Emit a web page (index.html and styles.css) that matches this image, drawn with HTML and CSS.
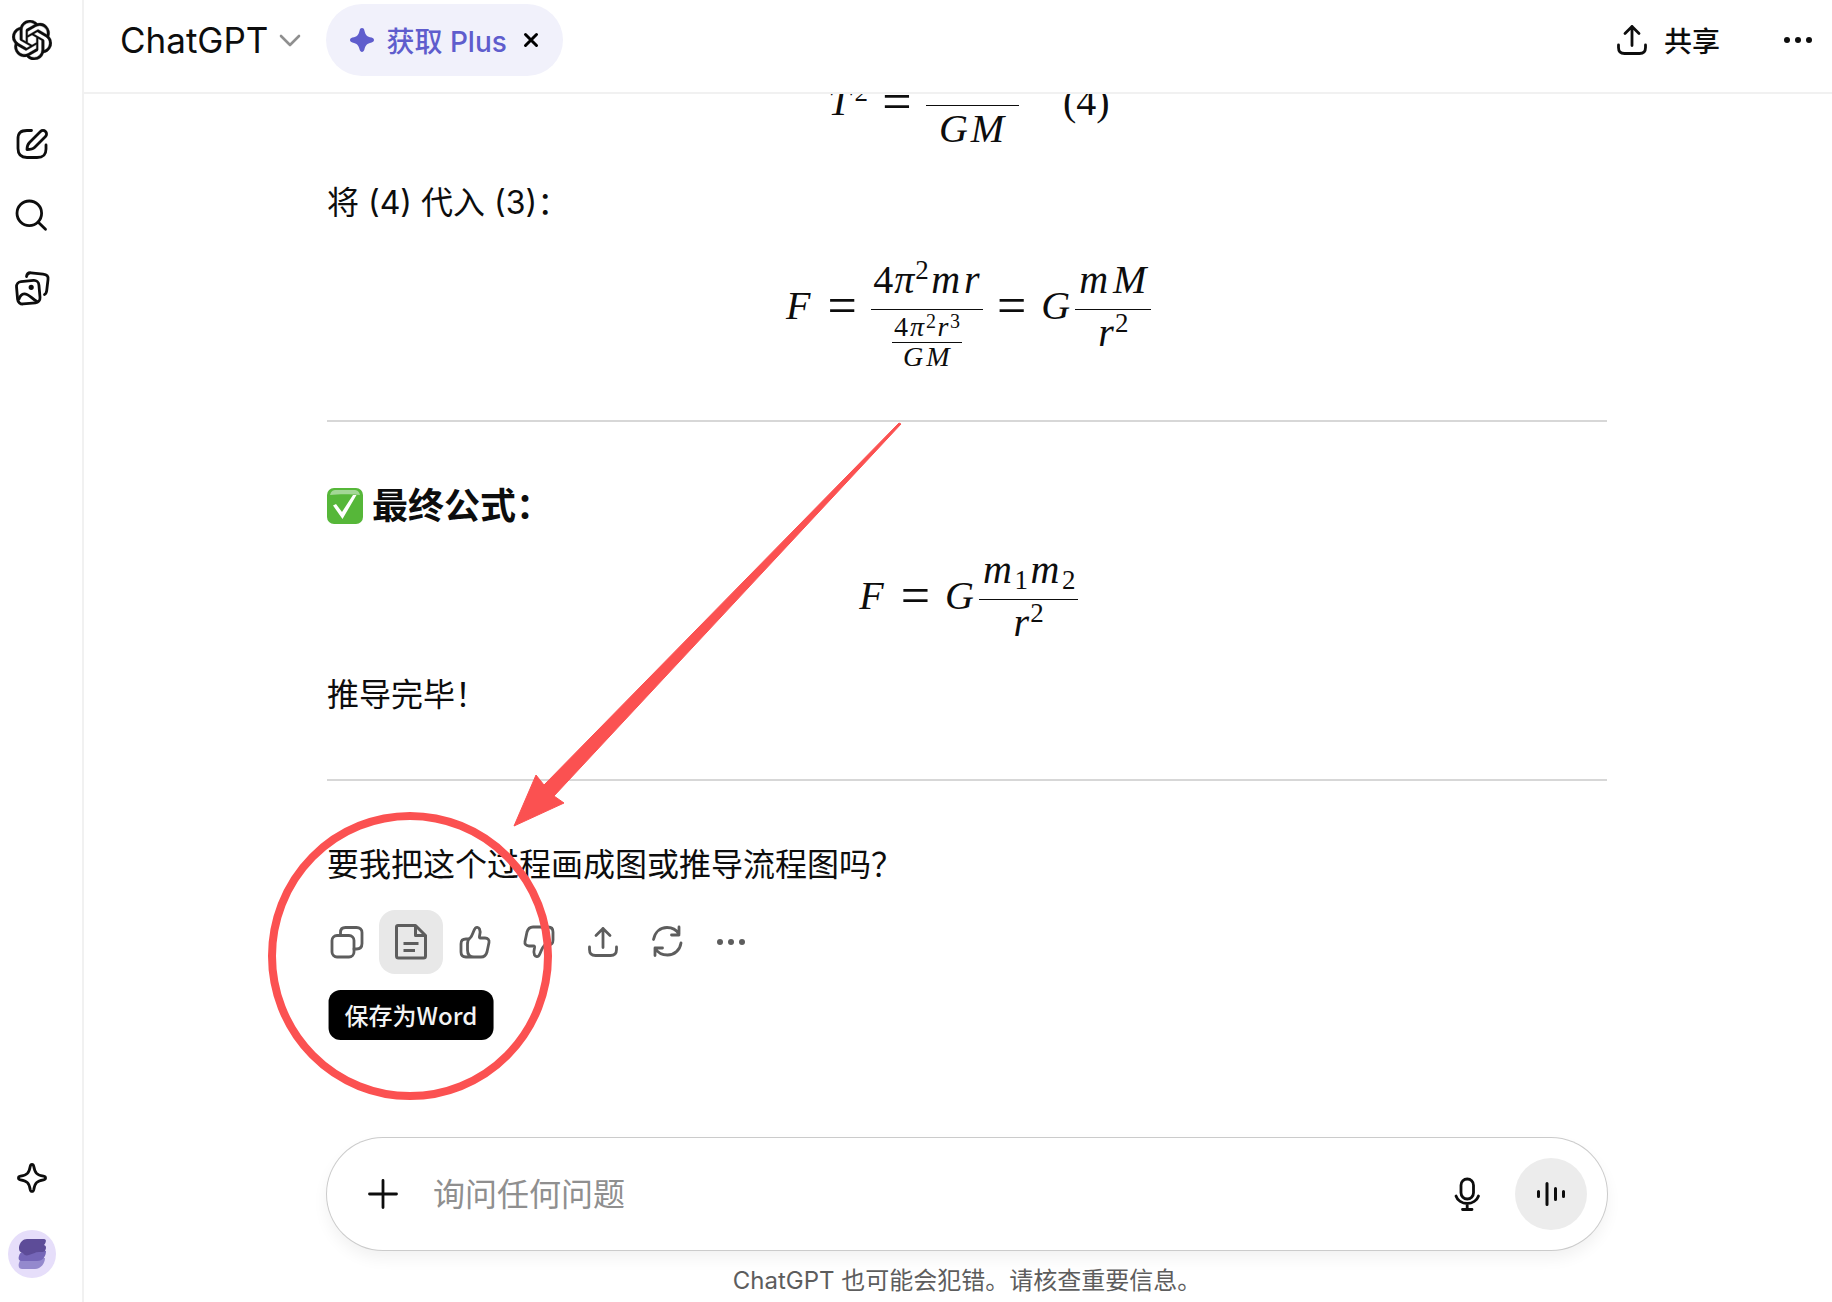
FILE: index.html
```html
<!DOCTYPE html>
<html lang="zh-CN">
<head>
<meta charset="utf-8">
<meta name="viewport" content="width=device-width, initial-scale=1">
<title>ChatGPT</title>
<link rel="stylesheet" href="styles.css">
</head>
<body>
<div class="app">
  <nav class="sidebar" aria-label="侧边栏">
    <a class="side-logo" href="#" aria-label="主页">
      <svg class="logo" width="40" height="40" viewBox="0 0 24 24" fill="currentColor"><path d="M22.2819 9.8211a5.9847 5.9847 0 0 0-.5157-4.9108 6.0462 6.0462 0 0 0-6.5098-2.9A6.0651 6.0651 0 0 0 4.9807 4.1818a5.9847 5.9847 0 0 0-3.9977 2.9 6.0462 6.0462 0 0 0 .7427 7.0966 5.98 5.98 0 0 0 .511 4.9107 6.051 6.051 0 0 0 6.5146 2.9001A5.9847 5.9847 0 0 0 13.2599 24a6.0557 6.0557 0 0 0 5.7718-4.2058 5.9894 5.9894 0 0 0 3.9977-2.9001 6.0557 6.0557 0 0 0-.7475-7.0729zm-9.022 12.6081a4.4755 4.4755 0 0 1-2.8764-1.0408l.1419-.0804 4.7783-2.7582a.7948.7948 0 0 0 .3927-.6813v-6.7369l2.02 1.1686a.071.071 0 0 1 .038.052v5.5826a4.504 4.504 0 0 1-4.4945 4.4944zm-9.6607-4.1254a4.4708 4.4708 0 0 1-.5346-3.0137l.142.0852 4.783 2.7582a.7712.7712 0 0 0 .7806 0l5.8428-3.3685v2.3324a.0804.0804 0 0 1-.0332.0615L9.74 19.9502a4.4992 4.4992 0 0 1-6.1408-1.6464zM2.3408 7.8956a4.485 4.485 0 0 1 2.3655-1.9728V11.6a.7664.7664 0 0 0 .3879.6765l5.8144 3.3543-2.0201 1.1685a.0757.0757 0 0 1-.071 0l-4.8303-2.7865A4.504 4.504 0 0 1 2.3408 7.872zm16.5963 3.8558L13.1038 8.364 15.1192 7.2a.0757.0757 0 0 1 .071 0l4.8303 2.7913a4.4944 4.4944 0 0 1-.6765 8.1042v-5.6772a.79.79 0 0 0-.407-.667zm2.0107-3.0231l-.142-.0852-4.7735-2.7818a.7759.7759 0 0 0-.7854 0L9.409 9.2297V6.8974a.0662.0662 0 0 1 .0284-.0615l4.8303-2.7866a4.4992 4.4992 0 0 1 6.6802 4.66zM8.3065 12.863l-2.02-1.1638a.0804.0804 0 0 1-.038-.0567V6.0742a4.4992 4.4992 0 0 1 7.3757-3.4537l-.142.0805L8.704 5.459a.7948.7948 0 0 0-.3927.6813zm1.0976-2.3654l2.602-1.4998 2.6069 1.4998v2.9994l-2.5974 1.4997-2.6067-1.4997Z"/></svg>
    </a>
    <button class="side-btn" aria-label="新聊天">
      <svg class="icon" viewBox="0 0 40 40"><path d="M19.5 6.5H15C8.500 6.500 6 9 6 15v9.500C6 31 9 33.500 15 33.500h10c6.500 0 9-2.500 9-8.500v-4"/><path d="M15 25.500c0-3.500 1-5.500 2.500-7l11-11a3.500 3.500 0 0 1 5 5l-11 11c-1.500 1.500-4 2-7.500 2Z"/></svg>
    </button>
    <button class="side-btn" aria-label="搜索">
      <svg class="icon" viewBox="0 0 40 40"><circle cx="17.300" cy="17.300" r="12.300"/><path d="M26.300 26.300l7.200 7"/></svg>
    </button>
    <button class="side-btn" aria-label="库">
      <svg class="icon" viewBox="0 0 40 40"><rect x="5" y="13" width="22.500" height="22.500" rx="5" transform="rotate(-5 16 24)"/><path d="M14.500 8.500c.5-3 2-4 4.500-3.700l12 1.300c4 .5 5.500 2 5 5.500l-1.300 11c-.3 2.200-.9 3.400-2.200 3.900M7 31c1-3 2.800-5 5.200-5.200C16.500 25.500 19 30 25 33.500"/><circle cx="19.200" cy="19.300" r="1.200" fill="currentColor"/></svg>
    </button>
    <button class="side-btn side-bottom" aria-label="升级套餐">
      <svg class="icon" viewBox="0 0 40 40"><path d="M20 6.500c1 0 1.500.7 1.800 2 1.100 6.500 3 8.600 9.700 9.700 2.700.5 2.700 3.100 0 3.600-6.700 1.100-8.600 3.200-9.700 9.700-.5 2.600-3.100 2.600-3.600 0-1.100-6.500-3-8.600-9.700-9.700-2.700-.5-2.700-3.100 0-3.600 6.700-1.100 8.600-3.200 9.700-9.700.3-1.300.8-2 1.800-2Z"/></svg>
    </button>
    <button class="avatar" aria-label="个人资料">
      <svg width="48" height="48" viewBox="0 0 48 48"><path fill="#9489cd" d="M11 33c1-4 4-5 8-5h18c0 5-4 11-10 11H14c-3 0-4-3-3-6Z"/><path fill="#7566b8" d="M11 26c1-4 4-5 8-5h19c0 5-3 10-9 10H14c-3 0-4-2-3-5Z"/><path fill="#5d4c98" d="M11 17c1-5 4-8 8-8h17c3 0 2 4 0 6 3 1 2 4 1 6-1 1-3 1-6 1-4 0-6 2-10 3-3 1-5 0-6-2-4-1-4-3-4-6Z"/></svg>
    </button>
  </nav>

  <div class="main">
    <header class="topbar">
      <button class="model">ChatGPT
        <svg width="24" height="24" viewBox="0 0 24 24" fill="none" stroke="#8f8f8f" stroke-width="2.600" stroke-linecap="round" stroke-linejoin="round"><path d="M3 8l9 9 9-9"/></svg>
      </button>
      <div class="plus-pill">
        <button class="plus-link">
          <svg width="24" height="24" viewBox="0 0 24 24" fill="currentColor"><path d="M12 0c1.300 0 2 .8 2.400 2.400 1.100 4.700 2.500 6.100 7.200 7.200 3.200.8 3.200 4 0 4.800-4.700 1.100-6.100 2.500-7.200 7.200-.8 3.200-4 3.200-4.800 0-1.100-4.700-2.500-6.100-7.200-7.200-3.200-.8-3.200-4 0-4.800 4.700-1.100 6.100-2.500 7.200-7.200C10 .8 10.700 0 12 0Z"/></svg>
          获取 Plus</button>
        <button class="plus-close" aria-label="关闭">
          <svg width="16" height="16" viewBox="0 0 16 16" fill="none" stroke="#000" stroke-width="3" stroke-linecap="round"><path d="M2.500 2.500l11 11M13.500 2.500l-11 11"/></svg>
        </button>
      </div>
      <button class="share">
        <svg class="icon" viewBox="0 0 40 40"><path d="M20 25.500V6.500M13 13.500l7-7 7 7M6.500 25v2.500c0 4 2 6 6 6h15c4 0 6-2 6-6V25"/></svg>
        共享</button>
      <button class="more" aria-label="更多">
        <svg class="icon dots" viewBox="0 0 40 40"><circle cx="9" cy="20" r="3"/><circle cx="20" cy="20" r="3"/><circle cx="31" cy="20" r="3"/></svg>
      </button>
    </header>

    <main class="thread">
      <article class="message">
        <div class="equation">
          <span class="row"><i class="wide">T</i><sup>2</sup></span>
          <b class="eq">=</b>
          <span class="frac">
            <span class="num num-empty"></span>
            <span class="bar"></span>
            <span class="den"><i class="wide">G</i><i class="widest">M</i></span>
          </span>
          <span class="row tag">(4)</span>
        </div>
        <p class="after-tagged">将 (4) 代入 (3)：</p>
        <div class="equation">
          <span class="row"><i class="wide">F</i></span>
          <b class="eq">=</b>
          <span class="frac">
            <span class="num"><span>4</span><i class="mid">π</i><sup>2</sup><i class="wide">m</i><i class="narrow">r</i></span>
            <span class="bar"></span>
            <span class="den">
              <span class="frac small">
                <span class="num"><span>4</span><i class="mid">π</i><sup>2</sup><i class="narrow">r</i><sup>3</sup></span>
                <span class="bar"></span>
                <span class="den"><i class="wide">G</i><i class="widest">M</i></span>
              </span>
            </span>
          </span>
          <b class="eq">=</b>
          <span class="row"><i class="wide">G</i></span>
          <span class="frac">
            <span class="num"><i class="wide">m</i><i class="widest">M</i></span>
            <span class="bar"></span>
            <span class="den"><i class="narrow">r</i><sup>2</sup></span>
          </span>
        </div>
        <hr>
        <h3>
          <svg width="36" height="36" viewBox="0 0 36 36"><rect width="36" height="36" rx="7" fill="#56b739"/><path d="M3 7c1-4 3-5 6-5h18c3 0 5 1 6 5-8-1-22-1-30 0Z" fill="#a3d796"/><path d="M6 17.500l3-1.500 6 8L26 7h3.500L15.500 31Z" fill="#fff"/></svg>
          最终公式：</h3>
        <div class="equation">
          <span class="row"><i class="wide">F</i></span>
          <b class="eq">=</b>
          <span class="row"><i class="wide">G</i></span>
          <span class="frac">
            <span class="num"><i class="wide">m</i><sub>1</sub><i class="wide">m</i><sub>2</sub></span>
            <span class="bar"></span>
            <span class="den"><i class="narrow">r</i><sup>2</sup></span>
          </span>
        </div>
        <p>推导完毕！</p>
        <hr>
        <p>要我把这个过程画成图或推导流程图吗？</p>
        <div class="actions">
          <button aria-label="复制"><svg class="icon" viewBox="0 0 40 40"><rect x="5" y="13.500" width="22" height="21.500" rx="5"/><path d="M13.500 13v-2.500c0-3.300 2-5 5-5h11c3.300 0 5.500 2 5.500 5v11c0 3.300-2 5.500-5.500 5.500h-2.500"/></svg></button>
          <div class="word">
            <button class="active" aria-label="保存为Word" aria-describedby="word-tip"><svg class="icon doc" viewBox="0 0 40 40"><path d="M7 3.500h17.500l10 10V34a2 2 0 0 1-2 2H7.500a2 2 0 0 1-2-2V5a1.500 1.500 0 0 1 1.500-1.500ZM24.500 4v9.500H34M12.500 21.500h15M12.500 28.500H24"/></svg></button>
            <span class="tooltip" id="word-tip" role="tooltip">保存为Word</span>
          </div>
          <button aria-label="赞"><svg class="icon" viewBox="0 0 40 40"><path d="M12.500 22c0-3 1-5 3-6.500 2-2 2.500-6 4.500-9 1-1.600 3.500-1.300 4.500.5 1.300 2.500.5 5 0 7-.3 1.500 0 2 1 2H30c3 0 4.500 2 4 4.500L32 30c-1 3.500-2.500 5-6 5h-7c-4.500 0-6.500-3-6.500-7ZM13.500 17H11c-3.500 0-5 1.500-5 5v8c0 3.500 1.500 5 5 5h8"/></svg></button>
          <button aria-label="踩"><svg class="icon" viewBox="0 0 40 40"><g transform="rotate(180 20 20)"><path d="M12.500 22c0-3 1-5 3-6.500 2-2 2.500-6 4.500-9 1-1.600 3.500-1.300 4.500.5 1.300 2.500.5 5 0 7-.3 1.500 0 2 1 2H30c3 0 4.500 2 4 4.500L32 30c-1 3.500-2.500 5-6 5h-7c-4.500 0-6.500-3-6.500-7ZM13.500 17H11c-3.500 0-5 1.500-5 5v8c0 3.500 1.500 5 5 5h8"/></g></svg></button>
          <button aria-label="共享回复"><svg class="icon" viewBox="0 0 40 40"><path d="M20 25.500V6.500M13 13.500l7-7 7 7M6.500 25v2.500c0 4 2 6 6 6h15c4 0 6-2 6-6V25"/></svg></button>
          <button aria-label="重新生成"><svg class="icon" viewBox="0 0 40 40"><path d="M6.500 17.500C8 10 13 5.500 20 5.500c5 0 9.500 2.500 12 6.500M32 5v8h-7.500M34 21c-1 7-6.500 12-13.500 12-5 0-9.500-2-12.500-6.500M8 33.500V26h7.500"/></svg></button>
          <button aria-label="更多操作"><svg class="icon dots" viewBox="0 0 40 40"><circle cx="9" cy="20" r="3"/><circle cx="20" cy="20" r="3"/><circle cx="31" cy="20" r="3"/></svg></button>
        </div>
        <svg class="annotation" width="660" height="690" viewBox="260 414 660 690" aria-hidden="true">
          <ellipse cx="410" cy="956" rx="138" ry="140" fill="none" stroke="#fb5151" stroke-width="8"/>
          <path d="M514 826l22-51 8 10L899 423l2 1L554 796l10 7Z" fill="#fb5151" stroke="#fb5151" stroke-linejoin="round"/>
        </svg>
      </article>
    </main>

    <footer class="dock">
      <form class="composer">
        <button type="button" class="round" aria-label="添加"><svg class="icon" viewBox="0 0 40 40"><path d="M20 6.500v27M6.500 20h27"/></svg></button>
        <input type="text" aria-label="询问任何问题" placeholder="询问任何问题">
        <button type="button" class="round" aria-label="听写"><svg class="icon" viewBox="0 0 40 40"><rect x="14" y="5" width="12.500" height="20" rx="6.250"/><path d="M9 22c1.500 4.500 6 7.500 11.200 7.500S30 26.500 31.500 22M20.200 30v5M15.500 35.500h9.500"/></svg></button>
        <button type="button" class="round voice" aria-label="语音模式"><svg class="icon bars" viewBox="0 0 40 40"><path d="M7.500 17.500v5M16 9.500v21M24.500 14.500v11M32.500 17.500v5"/></svg></button>
      </form>
      <p class="note">ChatGPT 也可能会犯错。请核查重要信息。</p>
    </footer>
  </div>
</div>
</body>
</html>
```
FILE: styles.css
```css
* { box-sizing: border-box; }

body {
  margin: 0;
  background: #fff;
  color: #0d0d0d;
  font-family: Inter, "Noto Sans CJK SC", sans-serif;
  font-size: 32px;
}

button {
  display: flex;
  align-items: center;
  justify-content: center;
  padding: 0;
  border: 0;
  background: none;
  color: inherit;
  font: inherit;
  cursor: pointer;
}

svg { display: block; flex: none; }

.icon {
  width: 40px;
  height: 40px;
  fill: none;
  stroke: currentColor;
  stroke-width: 2.8;
  stroke-linecap: round;
  stroke-linejoin: round;
}
.icon.dots { fill: currentColor; stroke: none; }
.icon.doc { stroke-width: 3; stroke-linecap: butt; }
.icon.bars { stroke-width: 3; }
.logo { stroke: currentColor; stroke-width: 0.2; }

.app { display: flex; height: 100vh; overflow: hidden; }

/* Sidebar */
.sidebar {
  display: flex;
  flex: none;
  flex-direction: column;
  width: 84px;
  padding-bottom: 24px;
  border-right: 2px solid #f1f1f1;
}
.side-logo {
  display: flex;
  align-items: center;
  justify-content: center;
  width: 64px;
  height: 80px;
  margin-bottom: 28px;
  color: inherit;
}
.side-btn { width: 64px; height: 72px; }
.side-bottom { margin-top: auto; }
.avatar {
  width: 48px;
  height: 48px;
  margin: 16px 8px 0;
  border-radius: 50%;
  background: #e6defa;
}

/* Top bar */
.main { display: flex; flex: 1; flex-direction: column; min-width: 0; }
.topbar {
  display: flex;
  flex: none;
  align-items: center;
  padding: 4px 14px 16px 36px;
  border-bottom: 2px solid #f1f1f1;
}
.model { gap: 10px; margin-right: 24px; font-size: 35px; }
.plus-pill {
  display: flex;
  align-items: center;
  gap: 16px;
  height: 72px;
  margin-right: auto;
  padding: 0 24px;
  border-radius: 36px;
  background: #f1f1fb;
}
.plus-link { gap: 12px; color: #5f5dcd; font-size: 28px; font-weight: 500; }
.share { gap: 12px; margin-right: 58px; font-size: 28px; font-weight: 500; }

/* Conversation, kept at its latest message */
.thread {
  display: flex;
  flex: 1;
  flex-direction: column;
  justify-content: flex-end;
  min-height: 0;
  padding: 0 24px 164px 42px;
  overflow: hidden;
}
.message {
  position: relative;
  width: 100%;
  max-width: 1280px;
  margin: 0 auto;
}
.message p, .message h3 { margin: 0; line-height: 56px; }
.message h3 {
  display: flex;
  align-items: center;
  gap: 9px;
  font-size: 36px;
  font-weight: 700;
}
.message hr {
  height: 2px;
  margin: 56px 0;
  border: 0;
  background: #d7d7d7;
}

/* Formulas */
.equation {
  display: flex;
  align-items: center;
  justify-content: center;
  margin: 16px 0 18px;
  font-family: "Liberation Serif", serif;
  font-size: 40px;
  line-height: 40px;
}
.equation + hr { margin-top: 48px; }
.message .after-tagged { margin-top: 26px; }
.row { display: flex; padding-bottom: 7px; }
.row + .frac { margin-left: 4px; }
.tag { margin-left: 44px; }
.eq {
  width: 30px;
  margin: 0 14px;
  padding-bottom: 8px;
  font-size: 52px;
  font-weight: 400;
  text-align: center;
}
.frac { display: grid; grid-template-rows: 1fr 1px 1fr; }
.num, .den { display: flex; justify-content: center; }
.num { align-items: flex-end; padding: 0 2px 9px; }
.den { align-items: flex-start; padding: 3px 2px 0; }
.num-empty { width: 93px; }
.bar { background: currentColor; }
.wide { width: 30px; }
.widest { width: 38px; }
.mid { width: 22px; }
.narrow { width: 18px; }
.equation .num .wide { width: 34px; }
.equation i { text-align: center; }
.equation sup, .equation sub { font-size: 27px; line-height: 40px; }
.equation sup { margin-top: -10px; margin-bottom: 10px; }
.equation sub { margin-top: 10px; margin-bottom: -10px; }
.small { font-size: 28px; line-height: 28px; }
.small .num { padding-bottom: 1px; }
.small .den { padding-top: 0; }
.equation .small sup {
  margin-top: -6px;
  margin-bottom: 6px;
  font-size: 20px;
  line-height: 28px;
}
.small .wide { width: 22px; }
.small .widest { width: 28px; }
.small .mid { width: 18px; }
.small .narrow { width: 14px; }

/* Reply actions */
.actions {
  display: flex;
  margin: 17px 0 0 -12px;
  color: #5d5d5d;
}
.actions button { width: 64px; height: 64px; border-radius: 16px; }
.actions .active { background: #e8e8e8; }
.word { position: relative; }
.tooltip {
  position: absolute;
  top: 80px;
  left: 50%;
  padding: 0 16px;
  border-radius: 12px;
  background: #000;
  color: #f3f3f3;
  font-family: "Noto Sans CJK SC", sans-serif;
  font-size: 24px;
  font-weight: 500;
  line-height: 50px;
  white-space: nowrap;
  transform: translateX(-50%);
}
.annotation {
  position: absolute;
  bottom: -130px;
  left: -67px;
  pointer-events: none;
}

/* Composer */
.dock { flex: none; padding: 0 24px 5px 42px; }
.composer {
  display: flex;
  align-items: center;
  max-width: 1280px;
  height: 112px;
  margin: 0 auto;
  padding: 0 20px;
  border-radius: 56px;
  background: #fff;
  box-shadow: 0 0 0 1px #cbcbcb, 0 8px 16px rgba(0, 0, 0, 0.06);
}
.composer input {
  flex: 1;
  min-width: 0;
  padding: 0 14px;
  border: 0;
  outline: 0;
  background: none;
  color: inherit;
  font: inherit;
}
.composer input::placeholder { color: #8f8f8f; opacity: 1; }
.round { flex: none; width: 72px; height: 72px; border-radius: 50%; }
.voice { margin-left: 12px; background: #ececec; }
.note {
  margin: 15px 0 0;
  color: #5d5d5d;
  font-size: 24px;
  line-height: 32px;
  text-align: center;
}
```
